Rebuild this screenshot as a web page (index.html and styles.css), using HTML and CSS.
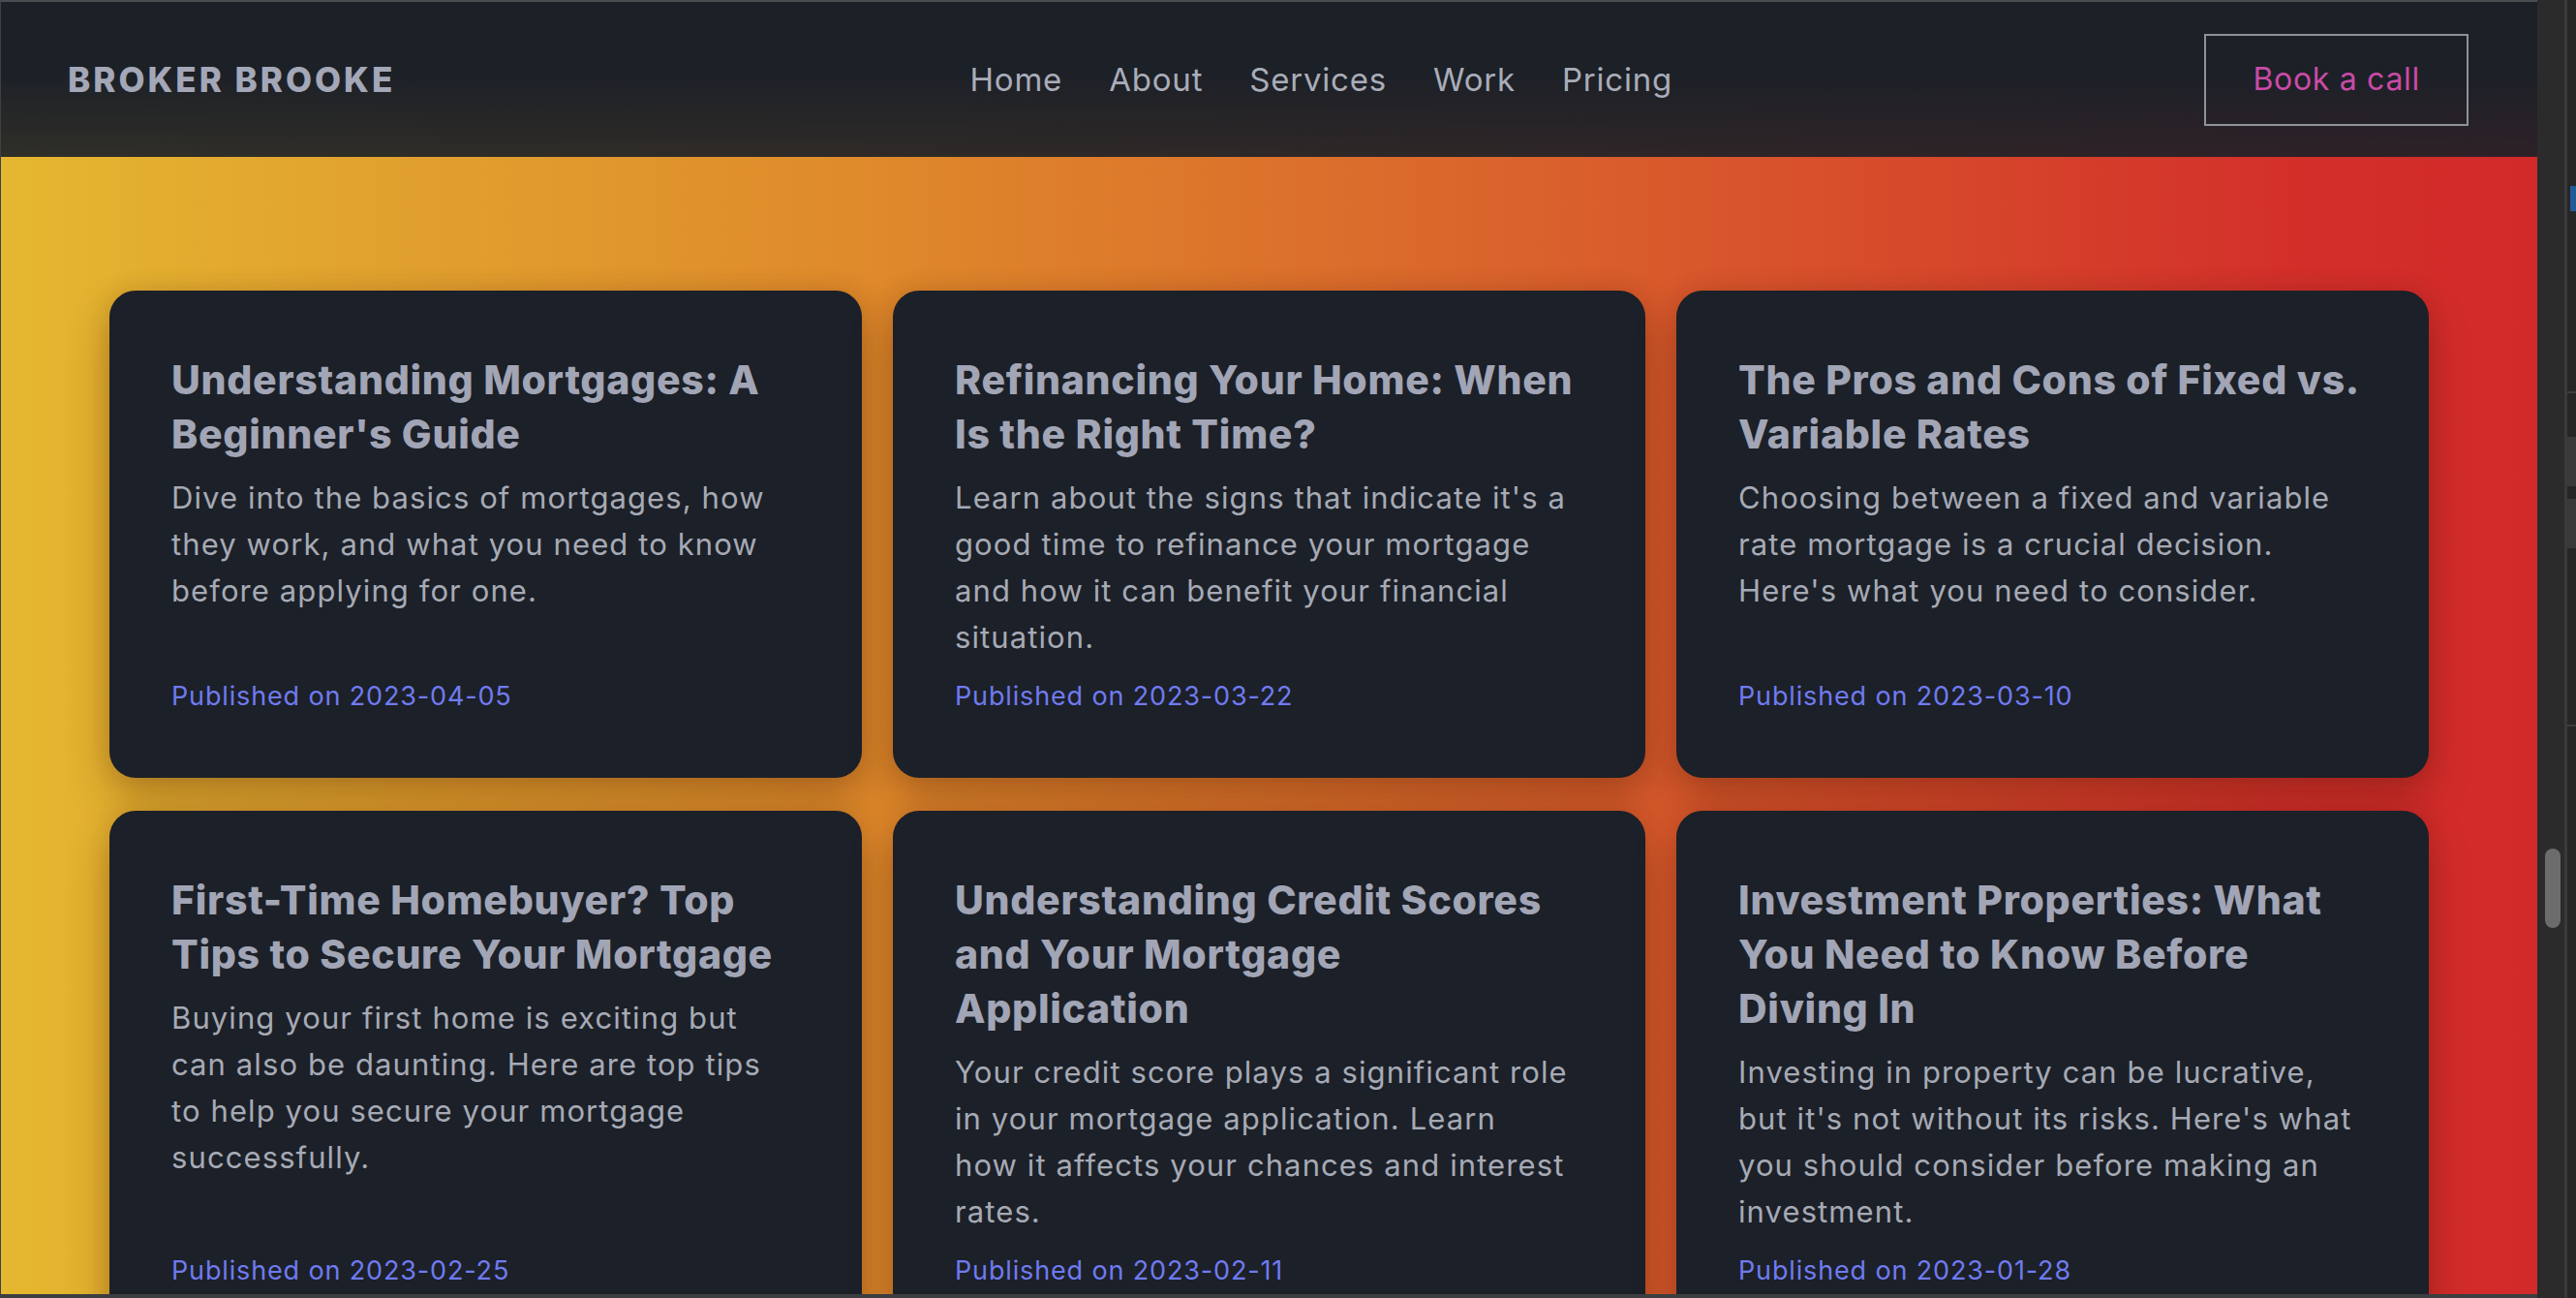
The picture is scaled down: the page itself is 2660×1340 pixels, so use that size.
FILE: index.html
```html
<!DOCTYPE html>
<html lang="en">
<head>
<meta charset="utf-8">
<title>Broker Brooke — Blog</title>
<link rel="stylesheet" href="styles.css">
</head>
<body>
<div class="screen">
  <div class="page">
    <header class="site-header">
      <a class="logo" href="#">BROKER BROOKE</a>
      <nav class="nav">
        <a href="#">Home</a>
        <a href="#">About</a>
        <a href="#">Services</a>
        <a href="#">Work</a>
        <a href="#">Pricing</a>
      </nav>
      <a class="cta" href="#">Book a call</a>
    </header>
    <main class="blog">
      <div class="grid">
        <article class="post">
          <h2 class="post-title">Understanding Mortgages: A<br>Beginner's Guide</h2>
          <p class="post-excerpt">Dive into the basics of mortgages, how<br>they work, and what you need to know<br>before applying for one.</p>
          <p class="post-date">Published on 2023-04-05</p>
        </article>
        <article class="post">
          <h2 class="post-title">Refinancing Your Home: When<br>Is the Right Time?</h2>
          <p class="post-excerpt">Learn about the signs that indicate it's a<br>good time to refinance your mortgage<br>and how it can benefit your financial<br>situation.</p>
          <p class="post-date">Published on 2023-03-22</p>
        </article>
        <article class="post">
          <h2 class="post-title">The Pros and Cons of Fixed vs.<br>Variable Rates</h2>
          <p class="post-excerpt">Choosing between a fixed and variable<br>rate mortgage is a crucial decision.<br>Here's what you need to consider.</p>
          <p class="post-date">Published on 2023-03-10</p>
        </article>
        <article class="post">
          <h2 class="post-title">First-Time Homebuyer? Top<br>Tips to Secure Your Mortgage</h2>
          <p class="post-excerpt">Buying your first home is exciting but<br>can also be daunting. Here are top tips<br>to help you secure your mortgage<br>successfully.</p>
          <p class="post-date">Published on 2023-02-25</p>
        </article>
        <article class="post">
          <h2 class="post-title">Understanding Credit Scores<br>and Your Mortgage<br>Application</h2>
          <p class="post-excerpt">Your credit score plays a significant role<br>in your mortgage application. Learn<br>how it affects your chances and interest<br>rates.</p>
          <p class="post-date">Published on 2023-02-11</p>
        </article>
        <article class="post">
          <h2 class="post-title">Investment Properties: What<br>You Need to Know Before<br>Diving In</h2>
          <p class="post-excerpt">Investing in property can be lucrative,<br>but it's not without its risks. Here's what<br>you should consider before making an<br>investment.</p>
          <p class="post-date">Published on 2023-01-28</p>
        </article>
      </div>
    </main>
  </div>
  <div class="scroll-track"><div class="scroll-thumb"></div></div>
  <div class="side-divider"></div>
  <div class="side-panel">
    <div class="side-mark side-mark--blue"></div>
    <div class="side-mark side-mark--line"></div>
    <div class="side-mark side-mark--block"></div>
    <div class="side-mark side-mark--block side-mark--tight"></div>
    <div class="side-mark side-mark--line side-mark--low"></div>
  </div>
</div>
</body>
</html>
```

FILE: styles.css
```css
* { box-sizing: border-box; }

html, body {
  margin: 0;
  padding: 0;
  background: #2a2a2b;
}

body {
  width: 2660px;
  height: 1340px;
  overflow: hidden;
  font-family: Inter, "Noto Sans", "Liberation Sans", sans-serif;
}

.screen {
  display: flex;
  width: 2660px;
  height: 1340px;
}

.page {
  width: 2620px;
  height: 1340px;
  flex: none;
  overflow: hidden;
  border-top: 2px solid #4a4d50;
  border-left: 1px solid #3e4144;
  border-bottom: 4px solid #3c3e41;
  background: linear-gradient(90deg,
    #e5b730 0%,
    #e2a82f 10%,
    #df8b2b 33%,
    #dc752b 48%,
    #d95e2c 63%,
    #d6452b 78%,
    #d3302a 90%,
    #d22a2a 100%);
}

/* Header */
.site-header {
  height: 160px;
  display: flex;
  align-items: center;
  justify-content: space-between;
  padding: 0 71px 0 69px;
  background: linear-gradient(180deg,
    rgba(28, 32, 39, 1) 0%,
    rgba(28, 32, 39, 1) 45%,
    rgba(28, 32, 39, 0.9) 100%);
}

.logo {
  font-weight: 800;
  font-size: 35px;
  letter-spacing: 3px;
  color: #a3a7b7;
  text-decoration: none;
  line-height: 48px;
}

.nav {
  display: flex;
  gap: 48px;
  margin-left: 44px;
}

.nav a {
  font-size: 33px;
  letter-spacing: 0.8px;
  line-height: 48px;
  color: #a9adb9;
  text-decoration: none;
}

.cta {
  display: block;
  border: 2px solid #8e939b;
  padding: 21px 48px 22px;
  font-size: 32px;
  line-height: 48px;
  letter-spacing: 0.7px;
  color: #ca4ba6;
  text-decoration: none;
}

/* Blog grid */
.blog {
  padding-top: 138px;
}

.grid {
  display: grid;
  grid-template-columns: repeat(3, 777px);
  column-gap: 32px;
  row-gap: 34px;
  justify-content: center;
}

.post {
  display: flex;
  flex-direction: column;
  padding: 64px;
  background: #1c2028;
  border-radius: 27px;
  box-shadow: 0 22px 44px rgba(60, 20, 0, 0.28), 0 0 24px rgba(60, 20, 0, 0.12);
}

.post-title {
  margin: 0 0 14px;
  font-size: 41px;
  font-weight: 800;
  line-height: 56px;
  letter-spacing: 0.7px;
  color: #a1a5b5;
  white-space: nowrap;
}

.post-excerpt {
  margin: 0;
  font-size: 31px;
  line-height: 48px;
  letter-spacing: 1.1px;
  color: #a6aab5;
  white-space: nowrap;
}

.post-date {
  margin: auto 0 0;
  padding-top: 17px;
  font-size: 27px;
  line-height: 40px;
  letter-spacing: 0.85px;
  color: #6f7bf0;
  white-space: nowrap;
}

/* Browser chrome on the right */
.scroll-track {
  width: 28px;
  height: 1340px;
  flex: none;
  background: #2b2b2b;
  padding: 876px 4px 0 8px;
}

.scroll-thumb {
  width: 16px;
  height: 82px;
  border-radius: 8px;
  background: #6c6c6c;
}

.side-divider {
  width: 3px;
  flex: none;
  background: #3a3a3a;
}

.side-panel {
  width: 9px;
  flex: none;
  background: #262626;
  display: flex;
  flex-direction: column;
}

.side-mark { flex: none; }

.side-mark--blue {
  margin-top: 192px;
  margin-left: 3px;
  height: 26px;
  background: #1f5b96;
}

.side-mark--line {
  margin-top: 186px;
  height: 2px;
  background: #3d3d3d;
}

.side-mark--block {
  margin-top: 45px;
  height: 51px;
  background: #3a3a3a;
}

.side-mark--tight {
  margin-top: 13px;
}

.side-mark--low {
  margin-top: 182px;
}
```
